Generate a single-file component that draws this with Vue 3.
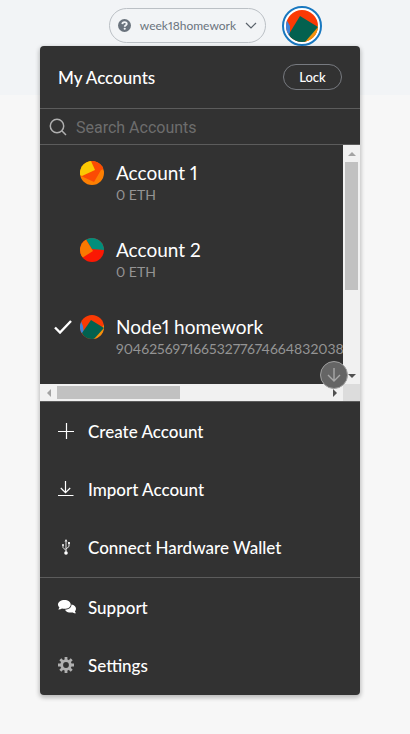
<script setup>
import { ref } from 'vue'

const search = ref('')
const accounts = [
  { name: 'Account 1', balance: '0 ETH', art: 'sun', selected: false },
  { name: 'Account 2', balance: '0 ETH', art: 'teal', selected: false },
  { name: 'Node1 homework', balance: '904625697166532776746648320380', art: 'node', selected: true }
]
</script>

<template>
  <div class="page">
    <header class="topbar">
      <button class="network" type="button">
        <svg class="help" viewBox="0 0 12 12" aria-hidden="true">
          <circle cx="6" cy="6" r="6" fill="#6a737d" />
          <path d="M4 4.700C4.100 3.400 5 2.900 6 2.900c1.200 0 2.100.6 2.100 1.700C8.100 5.900 6.200 5.800 6.200 7.200" fill="none" stroke="#f2f4f6" stroke-width="1.700" />
          <circle cx="6.200" cy="9" r="1" fill="#f2f4f6" />
        </svg>
        <span class="network-name">week18homework</span>
        <svg class="chevron" viewBox="0 0 12 8" aria-hidden="true">
          <path d="M1 1l5 5 5-5" fill="none" stroke="#5a626b" stroke-width="1.200" />
        </svg>
      </button>
      <button class="identity" type="button" aria-label="My accounts">
        <svg class="identity-art" viewBox="0 0 32 32" aria-hidden="true">
          <defs><clipPath id="top-clip"><circle cx="16" cy="16" r="16" /></clipPath></defs>
          <g clip-path="url(#top-clip)">
            <rect width="32" height="32" fill="#fa3a04" />
            <path d="M0 9l4 7v12l-6-4z" fill="#3f83d8" />
            <path d="M32 15L17 32h15z" fill="#f2920c" />
            <path d="M14 6l18 11-13 15H6L3 24z" fill="#03614f" />
          </g>
        </svg>
      </button>
    </header>

    <main class="menu">
      <div class="menu-head">
        <h1 class="title">My Accounts</h1>
        <button class="lock" type="button">Lock</button>
      </div>

      <label class="search">
        <svg class="search-icon" viewBox="0 0 18 18" aria-hidden="true">
          <circle cx="8" cy="8" r="6.700" fill="none" stroke="#b0b0b0" stroke-width="1.500" />
          <path d="M12.800 12.800L17 17" stroke="#b0b0b0" stroke-width="1.500" />
        </svg>
        <input v-model="search" class="search-input" type="text" placeholder="Search Accounts" aria-label="Search Accounts" />
      </label>

      <div class="scroller">
        <div class="accounts">
          <button v-for="a in accounts" :key="a.name" class="account" type="button">
            <span class="check">
              <svg v-if="a.selected" class="check-icon" viewBox="0 0 18 14" aria-hidden="true">
                <path d="M1 7.500l5 5L17 1" fill="none" stroke="#fff" stroke-width="2.400" />
              </svg>
            </span>
            <svg class="avatar" viewBox="0 0 24 24" aria-hidden="true">
              <defs><clipPath :id="'clip-' + a.art"><circle cx="12" cy="12" r="12" /></clipPath></defs>
              <g :clip-path="'url(#clip-' + a.art + ')'">
                <template v-if="a.art === 'sun'">
                  <rect width="24" height="24" fill="#fd7f02" />
                  <path d="M10 0h14v8l-3 1-7 12L1 15z" fill="#fb4b03" />
                  <path d="M0 0h11l4 9-13 6-2-1z" fill="#fbc903" />
                </template>
                <template v-else-if="a.art === 'teal'">
                  <rect width="24" height="24" fill="#fb1803" />
                  <path d="M5 0h19v12l-12-1z" fill="#018e7b" />
                  <path d="M0 0h5l8 13-11 7-2-2z" fill="#fa7900" />
                </template>
                <template v-else>
                  <rect width="24" height="24" fill="#fa3a04" />
                  <path d="M0 4l3 7 1 8-4-2z" fill="#3f83d8" />
                  <path d="M24 10L12 24h12z" fill="#f2920c" />
                  <path d="M11 5l13 8-10 11H5L2 18z" fill="#03614f" />
                </template>
              </g>
            </svg>
            <span class="account-text">
              <span class="account-name">{{ a.name }}</span>
              <span class="account-balance">{{ a.balance }}</span>
            </span>
          </button>
        </div>
        <div class="vbar" aria-hidden="true">
          <span class="arrow up"></span>
          <span class="vthumb"></span>
          <span class="arrow down"></span>
        </div>
        <div class="hbar" aria-hidden="true">
          <span class="arrow left"></span>
          <span class="hthumb"></span>
          <span class="arrow right"></span>
        </div>
        <div class="corner"></div>
        <button class="jump" type="button" aria-label="Scroll down">
          <svg class="jump-icon" viewBox="0 0 14 14" aria-hidden="true">
            <path d="M7 0v13M1 7l6 6 6-6" fill="none" stroke="#a8a8a8" stroke-width="1.400" />
          </svg>
        </button>
      </div>

      <nav class="actions">
        <button class="action" type="button">
          <svg class="icon" viewBox="0 0 16 16" aria-hidden="true">
            <path d="M8.500 0v16M0 8.500h16" stroke="#fff" stroke-width="1.200" />
          </svg>
          Create Account
        </button>
        <button class="action" type="button">
          <svg class="icon" viewBox="0 0 16 16" aria-hidden="true">
            <path d="M7.500 0v11.500M2.800 7l4.700 4.700L12.200 7M0 14.500h15.500" fill="none" stroke="#fff" stroke-width="1.200" />
          </svg>
          Import Account
        </button>
        <button class="action" type="button">
          <svg class="icon" viewBox="0 0 16 16" aria-hidden="true">
            <path d="M8 1.500v12M8 11.500L5 8.500V6M8 10l3-2.500V4" fill="none" stroke="#e8e8e8" stroke-width="1" />
            <path d="M8 0l1.500 2.500h-3zM10 3h2v2h-2z" fill="#e8e8e8" />
            <circle cx="5" cy="6" r="1.100" fill="#e8e8e8" />
            <circle cx="8" cy="14" r="1.800" fill="#fff" />
          </svg>
          Connect Hardware Wallet
        </button>
      </nav>

      <nav class="actions">
        <button class="action" type="button">
          <svg class="icon wide" viewBox="0 0 18 16" aria-hidden="true">
            <path d="M13.500 5.500c2.600.4 4.500 2.100 4.500 4.200 0 1-.4 1.900-1.100 2.600.2.800.6 1.400 1.100 2-1.200.1-2.300-.3-3.200-.9-3.300.7-6.700-.3-7.800-2.700 3.800-.1 6.500-2.200 6.500-5.200z" fill="#fff" />
            <path d="M6.500 1C10 1 12.700 2.900 12.700 5.400S10 9.800 6.500 9.800c-.9 0-1.700-.1-2.500-.4-1 .7-2.300 1.100-3.700 1 .6-.7 1-1.500 1.100-2.200C.5 7.400 0 6.500 0 5.400 0 2.900 3 1 6.500 1z" fill="#fff" />
          </svg>
          Support
        </button>
        <button class="action" type="button">
          <svg class="icon" viewBox="0 0 16 16" aria-hidden="true">
            <circle cx="8" cy="8" r="4.300" fill="none" stroke="#b0b0b0" stroke-width="2.800" />
            <path d="M8 0v3M8 13v3M0 8h3M13 8h3M2.300 2.300l2.200 2.200M11.500 11.500l2.200 2.200M13.700 2.300l-2.200 2.200M4.500 11.500l-2.200 2.200" stroke="#b0b0b0" stroke-width="2.800" />
          </svg>
          Settings
        </button>
      </nav>
    </main>
  </div>
</template>

<style>
body {
  margin: 0;
  background: #f7f7f7;
}
</style>

<style scoped>
.page {
  position: relative;
  min-height: 100vh;
  font-family: Lato, "Liberation Sans", sans-serif;
  font-variant-numeric: proportional-nums;
}
.page * {
  box-sizing: border-box;
}
button {
  margin: 0;
  padding: 0;
  border: 0;
  background: none;
  color: inherit;
  font: inherit;
  font-variant-numeric: inherit;
}
.topbar {
  display: flex;
  justify-content: flex-end;
  align-items: flex-start;
  gap: 16px;
  height: 95px;
  padding: 6px 88px 0 0;
  background: #f2f4f6;
}
.network {
  display: flex;
  align-items: center;
  gap: 9px;
  height: 35px;
  margin-top: 2px;
  padding: 0 8px;
  border: 1px solid #bbc0c5;
  border-radius: 18px;
  color: #6a737d;
  font-size: 12px;
}
.help {
  width: 13px;
  height: 13px;
}
.chevron {
  width: 12px;
  height: 8px;
}
.identity {
  display: flex;
  align-items: center;
  justify-content: center;
  width: 40px;
  height: 40px;
  border: 2px solid #1978c0;
  border-radius: 50%;
  background: #fff;
}
.identity-art {
  width: 32px;
  height: 32px;
}
.menu {
  position: absolute;
  top: 46px;
  left: 40px;
  right: 50px;
  overflow: hidden;
  border-radius: 4px;
  background: #323232;
  box-shadow: 0 2px 4px 1px rgba(0, 0, 0, 0.24);
  color: #fff;
}
.menu-head {
  display: flex;
  align-items: center;
  justify-content: space-between;
  height: 63px;
  padding: 0 18px;
  border-bottom: 1px solid #5c5c5c;
}
.title {
  margin: 0;
  font-size: 17px;
  font-weight: 500;
}
.lock {
  width: 59px;
  height: 26px;
  border: 1px solid #777a80;
  border-radius: 13px;
  font-size: 13px;
  font-weight: 500;
}
.search {
  display: flex;
  align-items: center;
  gap: 9px;
  height: 36px;
  padding: 0 9px;
  border-bottom: 1px solid #5c5c5c;
}
.search-icon {
  width: 18px;
  height: 18px;
}
.search-input {
  flex: 1;
  min-width: 0;
  padding: 2px 0 0;
  border: 0;
  outline: 0;
  background: transparent;
  color: #fff;
  font: 16px Roboto, sans-serif;
}
.search-input::placeholder {
  color: #6d6d6d;
}
.scroller {
  position: relative;
  display: grid;
  grid-template-columns: minmax(0, 1fr) 17px;
  grid-template-rows: 239px 17px;
}
.accounts {
  overflow: hidden;
}
.account {
  display: flex;
  align-items: flex-start;
  width: 100%;
  height: 77px;
  padding: 16px 0 0 14px;
  text-align: left;
}
.check {
  flex: none;
  width: 26px;
  padding-top: 5px;
}
.check-icon {
  display: block;
  width: 18px;
  height: 14px;
}
.avatar {
  flex: none;
  width: 24px;
  height: 24px;
}
.account-text {
  display: flex;
  flex-direction: column;
  padding-left: 12px;
  white-space: nowrap;
}
.account-name {
  font-size: 19px;
  line-height: 24px;
}
.account-balance {
  color: #949494;
  font-size: 14px;
  line-height: 20px;
}
.vbar {
  display: flex;
  flex-direction: column;
  align-items: center;
  background: #f1f1f1;
}
.vthumb {
  width: 13px;
  height: 128px;
  margin-bottom: auto;
  background: #c1c1c1;
}
.hbar {
  display: flex;
  align-items: center;
  background: #f1f1f1;
}
.hthumb {
  width: 123px;
  height: 13px;
  margin-right: auto;
  background: #c1c1c1;
}
.corner {
  background: #dcdcdc;
}
.arrow {
  display: flex;
  flex: none;
  align-items: center;
  justify-content: center;
  width: 17px;
  height: 17px;
}
.arrow::before {
  content: "";
  border: 4px solid transparent;
}
.up::before {
  border-top: 0;
  border-bottom-color: #a3a3a3;
}
.down::before {
  border-bottom: 0;
  border-top-color: #505050;
}
.left::before {
  border-left: 0;
  border-right-color: #a3a3a3;
}
.right::before {
  border-right: 0;
  border-left-color: #505050;
}
.jump {
  position: absolute;
  right: 12px;
  bottom: 12px;
  display: flex;
  align-items: center;
  justify-content: center;
  width: 28px;
  height: 28px;
  border: 1px solid #a0a0a0;
  border-radius: 50%;
  background: #656565;
}
.jump-icon {
  width: 14px;
  height: 14px;
}
.actions {
  padding-bottom: 1px;
  border-top: 1px solid #5c5c5c;
}
.action {
  display: flex;
  align-items: center;
  gap: 14px;
  width: 100%;
  height: 58px;
  padding: 0 18px;
  font-size: 17px;
  font-weight: 500;
  text-align: left;
}
.icon {
  flex: none;
  width: 16px;
  height: 16px;
}
.wide {
  width: 18px;
  margin-right: -2px;
}
</style>
